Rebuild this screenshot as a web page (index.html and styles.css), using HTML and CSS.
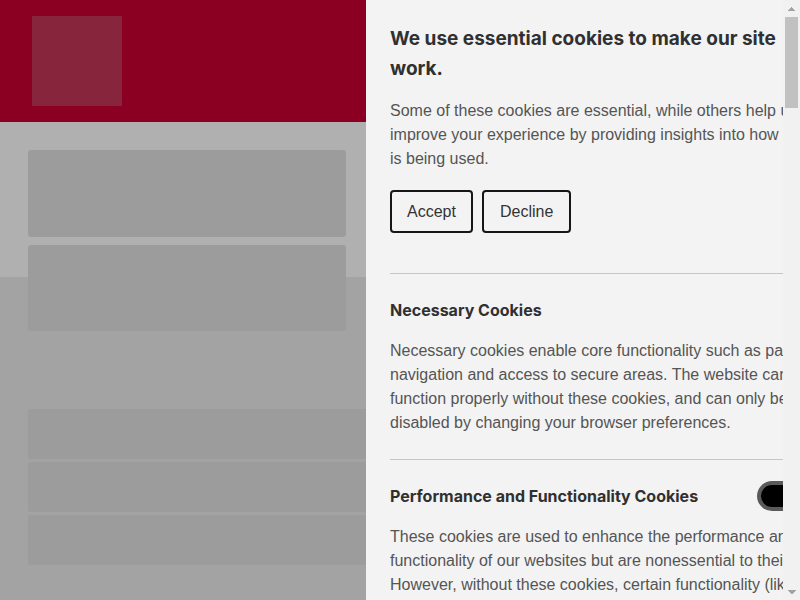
FILE: index.html
```html
<!DOCTYPE html>
<html lang="en">
<head>
<meta charset="utf-8">
<title>Cookie preferences</title>
<link rel="stylesheet" href="styles.css">
</head>
<body>
<div class="page">
  <div class="site">
    <header class="site-header">
      <div class="logo"></div>
    </header>
    <main class="site-main">
      <div class="card card-tall"></div>
      <div class="card card-tall"></div>
      <div class="list">
        <div class="card card-row"></div>
        <div class="card card-row"></div>
        <div class="card card-row"></div>
      </div>
    </main>
  </div>
  <aside class="panel">
    <div class="panel-scroll">
      <div class="panel-content">
        <h1 class="title">We use essential cookies to make our site work.</h1>
        <p class="text">Some of these cookies are essential, while others help us improve your experience by providing insights into how our site is being used.</p>
        <div class="actions">
          <button class="btn">Accept</button>
          <button class="btn">Decline</button>
        </div>
        <section class="group">
          <div class="group-head">
            <h2 class="group-title">Necessary Cookies</h2>
          </div>
          <p class="text">Necessary cookies enable core functionality such as page navigation and access to secure areas. The website cannot function properly without these cookies, and can only be disabled by changing your browser preferences.</p>
        </section>
        <section class="group">
          <div class="group-head">
            <h2 class="group-title">Performance and Functionality Cookies</h2>
            <span class="toggle"></span>
          </div>
          <p class="text">These cookies are used to enhance the performance and functionality of our websites but are nonessential to their use. However, without these cookies, certain functionality (like videos) may become unavailable.</p>
        </section>
        <section class="group">
          <div class="group-head">
            <h2 class="group-title">Analytics and Customization Cookies</h2>
            <span class="toggle"></span>
          </div>
          <p class="text">These cookies collect information that is used either in aggregate form to help us understand how our websites are being used or how effective our marketing campaigns are, or to help us customize our websites for you.</p>
        </section>
        <section class="group">
          <div class="group-head">
            <h2 class="group-title">Advertising Cookies</h2>
            <span class="toggle"></span>
          </div>
          <p class="text">These cookies are used to make advertising messages more relevant to you. They perform functions like preventing the same ad from continuously reappearing, ensuring that ads are properly displayed for advertisers, and in some cases selecting advertisements that are based on your interests.</p>
        </section>
      </div>
    </div>
    <div class="scrollbar">
      <span class="sb-btn sb-up"></span>
      <div class="sb-track"><span class="sb-thumb"></span></div>
      <span class="sb-btn sb-down"></span>
    </div>
  </aside>
</div>
</body>
</html>
```

FILE: styles.css
```css
* { box-sizing: border-box; }
html, body { margin: 0; padding: 0; height: 100%; }
body {
  font-family: "Liberation Sans", Arial, sans-serif;
  overflow: hidden;
}
.page {
  display: flex;
  height: 600px;
  width: 800px;
}
.site {
  width: 366px;
  flex-shrink: 0;
  display: flex;
  flex-direction: column;
  overflow: hidden;
  background: #a3a3a3;
}
.site-header {
  height: 122px;
  background: #8b0022;
  padding: 16px 32px;
  flex-shrink: 0;
}
.logo {
  width: 90px;
  height: 90px;
  background: #86253b;
}
.site-main {
  flex: 1;
  background: linear-gradient(#b0b0b0 0 155px, #a3a3a3 155px);
  padding: 28px 0 0 28px;
  display: flex;
  flex-direction: column;
  gap: 8px;
}
.card {
  background: #9c9c9c;
  border-radius: 3px;
}
.card-tall {
  width: 318px;
  height: 87px;
}
.card-tall + .card-tall { height: 86px; }
.list {
  margin-top: 70px;
  display: flex;
  flex-direction: column;
  gap: 3px;
}
.card-row {
  width: 420px;
  height: 50px;
}

.panel {
  flex: 1;
  display: flex;
  background: #f3f3f3;
  min-width: 0;
}
.panel-scroll {
  flex: 1;
  overflow: hidden;
  min-width: 0;
}
.panel-content {
  width: 480px;
  padding: 24px 0 24px 24px;
  min-height: 3730px;
}
.title {
  margin: 0;
  width: 400px;
  font-family: Inter, "Liberation Sans", sans-serif;
  font-weight: 700;
  font-size: 19px;
  line-height: 30px;
  color: #303030;
}
.text {
  margin: 15px 0 0;
  font-size: 16px;
  line-height: 24px;
  color: #555555;
}
.actions {
  display: flex;
  gap: 9px;
  margin-top: 19px;
  margin-bottom: 40px;
}
.btn {
  height: 43px;
  padding: 0 15px;
  border: 2px solid #161616;
  border-radius: 4px;
  background: #f3f3f3;
  font-family: "Liberation Sans", Arial, sans-serif;
  font-size: 16px;
  color: #333333;
}
.btn + .btn { padding: 0 16px; }
.group {
  border-top: 1px solid #c6c6c6;
  padding: 24px 0 24px;
}
.group-head {
  display: flex;
  align-items: center;
  height: 24px;
}
.group-title {
  margin: 0;
  flex: 1;
  font-family: Inter, "Liberation Sans", sans-serif;
  font-weight: 700;
  font-size: 16px;
  line-height: 24px;
  color: #303030;
}
.group .text { margin-top: 17px; }
.toggle {
  width: 56px;
  height: 30px;
  margin-right: 33px;
  border-radius: 15px;
  background: #000;
  border: 4px solid #5a5a5a;
  flex-shrink: 0;
}

.scrollbar {
  width: 17px;
  flex-shrink: 0;
  background: #f1f1f1;
  display: flex;
  flex-direction: column;
}
.sb-btn {
  height: 17px;
  flex-shrink: 0;
  background-repeat: no-repeat;
  background-size: 8px 4px;
  background-position: center;
}
.sb-up {
  background-image: conic-gradient(from 135deg at 50% 0, #a3a3a3 0 90deg, transparent 0);
}
.sb-down {
  background-image: conic-gradient(from -45deg at 50% 100%, #a3a3a3 0 90deg, transparent 0);
}
.sb-track {
  flex: 1;
  padding: 0 2px;
}
.sb-thumb {
  display: block;
  height: 91px;
  background: #c1c1c1;
}
```
